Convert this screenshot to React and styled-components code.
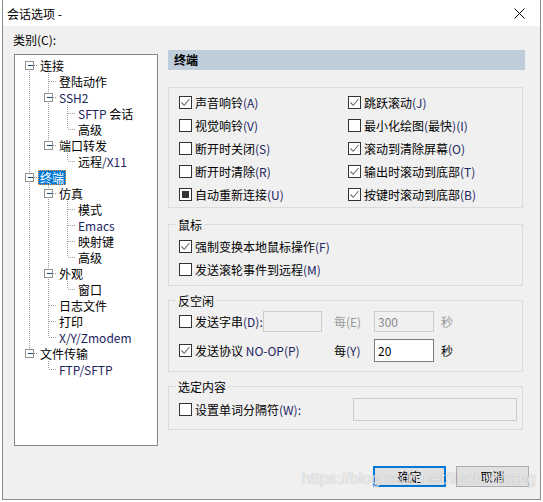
import React from "react";
import styled, { createGlobalStyle } from "styled-components";

const GlobalStyle = createGlobalStyle`
  html, body {
    margin: 0;
    padding: 0;
    background: #fff;
  }
  body {
    font-family: "Noto Sans CJK SC", "Noto Sans", sans-serif;
    font-size: 12px;
    color: #000;
  }
`;

const Window = styled.div`
  position: relative;
  box-sizing: border-box;
  width: 539px;
  height: 500px;
  margin-left: 2px;
  border: 1px solid #8c8c8c;
  border-top: none;
  background: #f0f0f0;
  display: flex;
  flex-direction: column;
  overflow: hidden;
`;

const TitleBar = styled.div`
  height: 26px;
  flex-shrink: 0;
  background: #fff;
  display: flex;
  align-items: center;
  justify-content: space-between;
  padding: 0 15px 0 4px;
`;

const Body = styled.div`
  flex: 1;
  display: grid;
  grid-template-columns: 144px 357px;
  column-gap: 10px;
  align-items: start;
  padding: 6px 0 0 11px;
`;

const LeftCol = styled.div`
  display: flex;
  flex-direction: column;
`;

const Caption = styled.div`
  line-height: 16px;
  margin: 0 0 6px -1px;
`;

const Tree = styled.div`
  box-sizing: border-box;
  height: 392px;
  border: 1px solid #828790;
  background: #fff;
  padding-top: 2px;
`;

const TreeRow = styled.div`
  display: flex;
  align-items: center;
  height: 16px;
`;

const TreeLabel = styled.span`
  padding: 0 2px;
  line-height: 15px;
  white-space: nowrap;
  ${({ $selected }) =>
    $selected &&
    `
    background: #0078d7;
    color: #fff;
    outline: 1px dotted #ff9a3c;
    outline-offset: -1px;
  `}
`;

const Latin = styled.span`
  color: ${({ $plain }) => ($plain ? "inherit" : "#1c2560")};
`;

const RightCol = styled.div`
  display: flex;
  flex-direction: column;
  padding-top: 18px;
`;

const Header = styled.div`
  height: 20px;
  line-height: 20px;
  background: #bfcddb;
  font-weight: bold;
  padding-left: 6px;
`;

const Group = styled.div`
  position: relative;
  box-sizing: border-box;
  width: 355px;
  height: ${({ $h }) => $h}px;
  margin-top: ${({ $mt }) => $mt}px;
  border: 1px solid #dcdcdc;
  padding: ${({ $pt }) => $pt}px 0 0 10px;
`;

const GroupTitle = styled.span`
  position: absolute;
  top: -8px;
  left: 7px;
  padding: 0 2px;
  line-height: 16px;
  background: #f0f0f0;
`;

const CheckGrid = styled.div`
  display: grid;
  grid-template-columns: 169px auto;
`;

const CheckRow = styled.label`
  display: flex;
  align-items: center;
  height: 23px;
  white-space: nowrap;
  width: ${({ $w }) => ($w ? `${$w}px` : "auto")};
  flex-shrink: 0;
`;

const Box = styled.span`
  box-sizing: border-box;
  width: 13px;
  height: 13px;
  border: 1px solid #333;
  background: #fff;
  margin-right: 3px;
  flex-shrink: 0;
  display: flex;
  align-items: center;
  justify-content: center;
`;

const Mixed = styled.span``;

const IdleRow = styled.div`
  display: grid;
  grid-template-columns: 155px 40px 60px auto;
  align-items: center;
  height: 24px;
  margin-bottom: 5px;
`;

const Cell = styled.div`
  display: flex;
  align-items: center;
  color: ${({ $dim }) => ($dim ? "#9a9a9a" : "#000")};
  padding-left: ${({ $pl }) => $pl || 0}px;
`;

const Field = styled.div`
  box-sizing: border-box;
  width: ${({ $w }) => $w}px;
  height: ${({ $h }) => $h}px;
  border: 1px solid ${({ $active }) => ($active ? "#7a7a7a" : "#cccccc")};
  background: ${({ $active }) => ($active ? "#fff" : "#f0f0f0")};
  color: ${({ $active }) => ($active ? "#000" : "#8a8a8a")};
  padding-left: 3px;
  display: flex;
  align-items: center;
  flex-shrink: 0;
`;

const SelRow = styled.div`
  display: grid;
  grid-template-columns: 174px 164px;
  align-items: center;
  height: 23px;
`;

const Buttons = styled.div`
  display: flex;
  justify-content: flex-end;
  gap: 10px;
  margin: 36px -4px 0 0;
`;

const Button = styled.button`
  box-sizing: border-box;
  width: 73px;
  height: 21px;
  padding: 0;
  font: inherit;
  color: #000;
  background: #e1e1e1;
  border: ${({ $default }) => ($default ? "2px solid #0078d7" : "1px solid #adadad")};
`;

const Watermark = styled.div`
  position: absolute;
  left: 299px;
  top: 470px;
  font-family: "Liberation Sans", Arial, sans-serif;
  font-size: 16px;
  color: rgba(255, 255, 255, 0.8);
  text-shadow: 0 0 1px rgba(0, 0, 0, 0.35);
  pointer-events: none;
  white-space: nowrap;
`;

function Text({ children, plain }) {
  const parts = String(children).split(/([\x20-\x7e]+)/).filter(Boolean);
  return (
    <Mixed>
      {parts.map((p, i) =>
        /^[\x20-\x7e]+$/.test(p) && p.trim() ? (
          <Latin key={i} $plain={plain}>
            {p}
          </Latin>
        ) : (
          <React.Fragment key={i}>{p}</React.Fragment>
        )
      )}
    </Mixed>
  );
}

function Check({ state, label, w }) {
  return (
    <CheckRow $w={w}>
      <Box>
        {state === "on" && (
          <svg width="11" height="11" viewBox="0 0 11 11">
            <path d="M1.5 5.5 L4.2 8.3 L9.5 2" fill="none" stroke="#6a6a6a" strokeWidth="1.1" />
          </svg>
        )}
        {state === "mixed" && (
          <svg width="7" height="7">
            <rect x="0" y="0" width="7" height="7" fill="#333" />
          </svg>
        )}
      </Box>
      <Text>{label}</Text>
    </CheckRow>
  );
}

const treeData = [
  {
    label: "连接",
    children: [
      { label: "登陆动作" },
      { label: "SSH2", children: [{ label: "SFTP 会话" }, { label: "高级" }] },
      { label: "端口转发", children: [{ label: "远程/X11" }] },
    ],
  },
  {
    label: "终端",
    selected: true,
    children: [
      {
        label: "仿真",
        children: [{ label: "模式" }, { label: "Emacs" }, { label: "映射键" }, { label: "高级" }],
      },
      { label: "外观", children: [{ label: "窗口" }] },
      { label: "日志文件" },
      { label: "打印" },
      { label: "X/Y/Zmodem" },
    ],
  },
  { label: "文件传输", children: [{ label: "FTP/SFTP" }] },
];

function flatten(nodes, level = 0, cont = [], out = []) {
  nodes.forEach((n, i) => {
    const last = i === nodes.length - 1;
    out.push({ ...n, level, last, cont, first: level === 0 && i === 0 });
    if (n.children) flatten(n.children, level + 1, [...cont, !last], out);
  });
  return out;
}

const rows = flatten(treeData);

function Gutter({ level, hasChildren, last, cont, first }) {
  const w = 23 + 19 * level;
  const x = 14 + 19 * level + 0.5;
  const dot = { stroke: "#a0a0a0", strokeDasharray: "1 1", shapeRendering: "crispEdges" };
  return (
    <svg width={w} height="16" style={{ flexShrink: 0 }}>
      {cont.map((c, i) =>
        c ? <line key={i} x1={14 + 19 * i + 0.5} x2={14 + 19 * i + 0.5} y1="0" y2="16" {...dot} /> : null
      )}
      <line x1={x} x2={x} y1={first ? 8 : 0} y2={last ? 8 : 16} {...dot} />
      <line x1={x} x2={w} y1="8.5" y2="8.5" {...dot} />
      {hasChildren && (
        <g shapeRendering="crispEdges">
          <rect x={x - 4} y="4.5" width="8" height="8" fill="#fff" stroke="#919191" />
          <line x1={x - 2} x2={x + 3} y1="8.5" y2="8.5" stroke="#1f3f8f" />
        </g>
      )}
    </svg>
  );
}

export default function App() {
  return (
    <>
      <GlobalStyle />
      <Window>
        <TitleBar>
          <span>会话选项 -</span>
          <svg width="11" height="11" viewBox="0 0 11 11">
            <path d="M0.5 0.5 L10.5 10.5 M10.5 0.5 L0.5 10.5" stroke="#000" strokeWidth="1" />
          </svg>
        </TitleBar>
        <Body>
          <LeftCol>
            <Caption>类别(C):</Caption>
            <Tree>
              {rows.map((r, i) => (
                <TreeRow key={i}>
                  <Gutter
                    level={r.level}
                    hasChildren={!!r.children}
                    last={r.last}
                    cont={r.cont}
                    first={r.first}
                  />
                  <TreeLabel $selected={r.selected}>
                    <Text plain={r.selected}>{r.label}</Text>
                  </TreeLabel>
                </TreeRow>
              ))}
            </Tree>
          </LeftCol>

          <RightCol>
            <Header>终端</Header>

            <Group $mt={17} $h={121} $pt={3}>
              <CheckGrid>
                <Check state="on" label="声音响铃(A)" />
                <Check state="on" label="跳跃滚动(J)" />
                <Check label="视觉响铃(V)" />
                <Check label="最小化绘图(最快)(I)" />
                <Check label="断开时关闭(S)" />
                <Check state="on" label="滚动到清除屏幕(O)" />
                <Check label="断开时清除(R)" />
                <Check state="on" label="输出时滚动到底部(T)" />
                <Check state="mixed" label="自动重新连接(U)" />
                <Check state="on" label="按键时滚动到底部(B)" />
              </CheckGrid>
            </Group>

            <Group $mt={16} $h={62} $pt={10}>
              <GroupTitle>鼠标</GroupTitle>
              <Check state="on" label="强制变换本地鼠标操作(F)" />
              <Check label="发送滚轮事件到远程(M)" />
            </Group>

            <Group $mt={14} $h={72} $pt={8}>
              <GroupTitle>反空闲</GroupTitle>
              <IdleRow>
                <Cell>
                  <Check label="发送字串(D):" w={84} />
                  <Field $w={59} $h={21} />
                </Cell>
                <Cell $dim>每(E)</Cell>
                <Field $w={60} $h={21}>300</Field>
                <Cell $dim $pl={7}>秒</Cell>
              </IdleRow>
              <IdleRow>
                <Cell>
                  <Check state="on" label="发送协议 NO-OP(P)" />
                </Cell>
                <Cell>
                  每<Latin>(Y)</Latin>
                </Cell>
                <Field $w={60} $h={23} $active>
                  20
                </Field>
                <Cell $pl={7}>秒</Cell>
              </IdleRow>
            </Group>

            <Group $mt={14} $h={44} $pt={11}>
              <GroupTitle>选定内容</GroupTitle>
              <SelRow>
                <Check label="设置单词分隔符(W):" />
                <Field $w={164} $h={23} />
              </SelRow>
            </Group>

            <Buttons>
              <Button $default>确定</Button>
              <Button>取消</Button>
            </Buttons>
          </RightCol>
        </Body>
        <Watermark>https://blog.csdn.net/liuchunhang</Watermark>
      </Window>
    </>
  );
}
